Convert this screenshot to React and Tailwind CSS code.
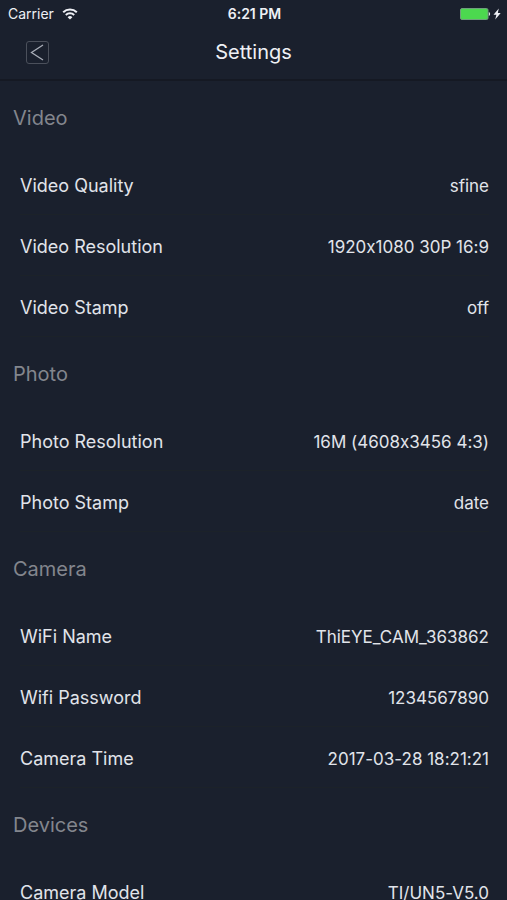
const sections = [
  {
    title: "Video",
    items: [
      { label: "Video Quality", value: "sfine" },
      { label: "Video Resolution", value: "1920x1080 30P 16:9" },
      { label: "Video Stamp", value: "off" },
    ],
  },
  {
    title: "Photo",
    items: [
      { label: "Photo Resolution", value: "16M (4608x3456 4:3)" },
      { label: "Photo Stamp", value: "date" },
    ],
  },
  {
    title: "Camera",
    items: [
      { label: "WiFi Name", value: "ThiEYE_CAM_363862" },
      { label: "Wifi Password", value: "1234567890" },
      { label: "Camera Time", value: "2017-03-28 18:21:21" },
    ],
  },
  {
    title: "Devices",
    items: [{ label: "Camera Model", value: "TI/UN5-V5.0" }],
  },
];

const WifiIcon = () => (
  <svg viewBox="0 0 16 12" className="w-4 h-3" fill="none" stroke="currentColor" strokeWidth="2">
    <path d="M1.2 4.2a9.8 9.8 0 0 1 13.6 0" />
    <path d="M3.8 7a6.1 6.1 0 0 1 8.4 0" />
    <path d="M8 11.6 5.6 9.2a3.4 3.4 0 0 1 4.8 0z" fill="currentColor" stroke="none" />
  </svg>
);

const StatusBar = () => (
  <div className="grid grid-cols-3 items-center h-7 pl-2 pr-1.5 text-sm">
    <div className="flex items-center gap-2">
      <span>Carrier</span>
      <WifiIcon />
    </div>
    <div className="text-center font-semibold">6:21 PM</div>
    <div className="flex items-center justify-end gap-0.5">
      <svg viewBox="0 0 31 12" className="w-[31px] h-3">
        <rect x="0.5" y="0.5" width="27.5" height="11" rx="1.5" fill="#4cd94f" stroke="#6f9f7c" />
        <path d="M28.8 4v4c1.8-.6 1.8-3.4 0-4z" fill="#e5e7eb" />
      </svg>
      <svg viewBox="0 0 8 12" className="w-2 h-3" fill="currentColor">
        <path d="M5.8 0.5 0.5 6.8h2.9L2.2 11.5l5.5-6.6H4.8z" />
      </svg>
    </div>
  </div>
);

const Header = () => (
  <header className="pb-[3px] border-b-2 border-[#151923] text-[#eef0f5]">
    <StatusBar />
    <div className="grid grid-cols-[48px_1fr_48px] items-center h-12 px-[13px]">
      <button aria-label="Back" className="flex items-center justify-center w-12 h-12">
        <svg viewBox="0 0 24 24" className="w-6 h-6" fill="none" stroke="#a9aeb8">
          <rect x="1.5" y="1.5" width="22" height="22" rx="2.5" stroke="#4b505b" />
          <path d="M18 5 6.5 12.5 18 20" strokeWidth="1.3" />
        </svg>
      </button>
      <h1 className="text-center text-xl">Settings</h1>
    </div>
  </header>
);

const SettingRow = ({ label, value }) => (
  <li className="border-b border-[#1c2229] ml-5 mr-[18px]">
    <button className="flex items-baseline justify-between gap-4 w-full h-[60px] pt-[18px] text-left">
      <span className="text-lg">{label}</span>
      <span className="text-[17px] text-right">{value}</span>
    </button>
  </li>
);

const App = () => {
  return (
    <div className="h-screen flex flex-col overflow-hidden bg-[#1a202d] text-[#e1e4ea] font-['Inter',sans-serif] [font-feature-settings:'calt'_0]">
      <Header />
      <main className="flex-1 overflow-hidden">
        {sections.map((section) => (
          <section key={section.title}>
            <h2 className="flex items-center h-[73px] pl-[13px] text-xl text-[#83868d]">{section.title}</h2>
            <ul>
              {section.items.map((item) => (
                <SettingRow key={item.label} label={item.label} value={item.value} />
              ))}
            </ul>
          </section>
        ))}
      </main>
    </div>
  );
};

export default App;
